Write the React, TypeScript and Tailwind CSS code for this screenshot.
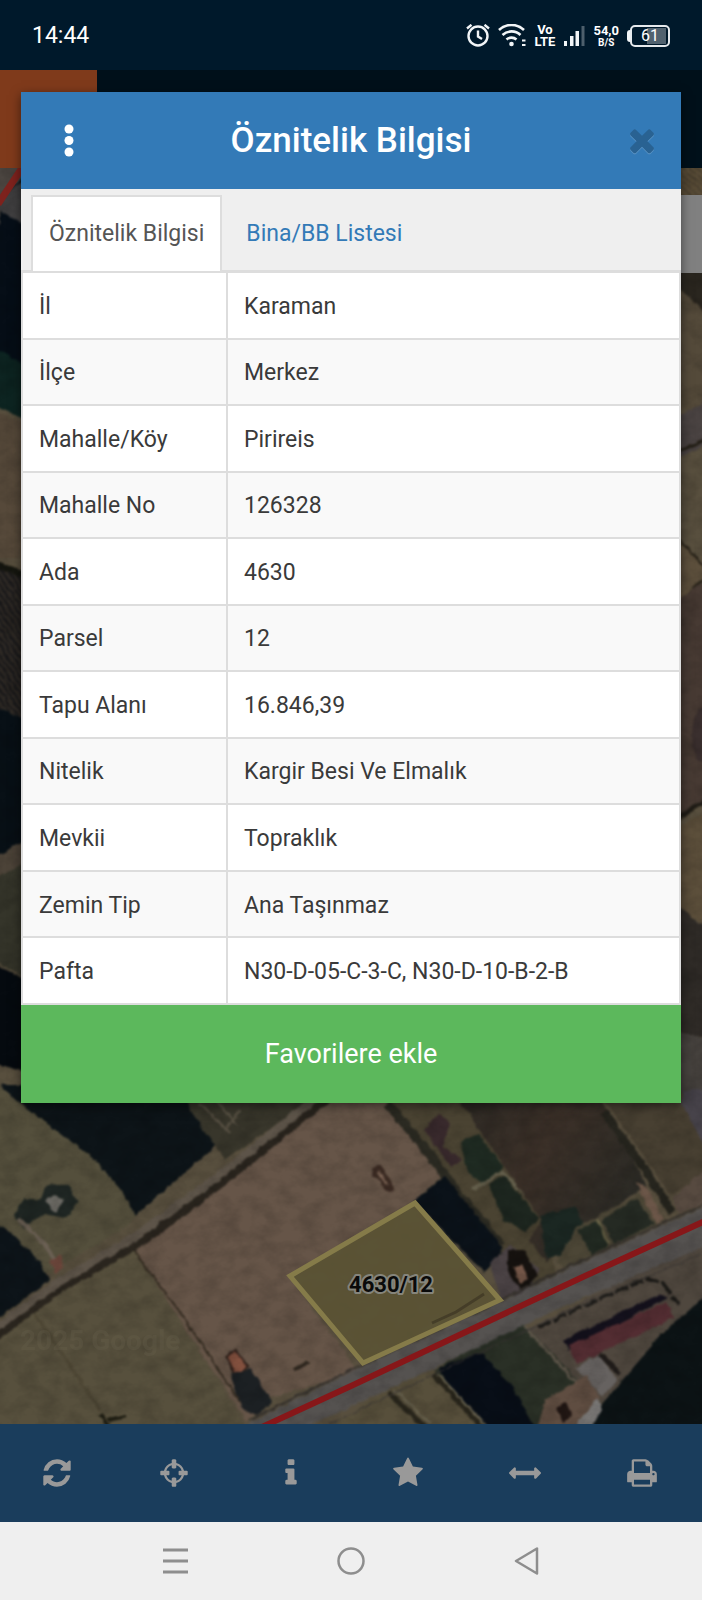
import React from 'react';

const rows = [
  { label: 'İl', value: 'Karaman' },
  { label: 'İlçe', value: 'Merkez' },
  { label: 'Mahalle/Köy', value: 'Pirireis' },
  { label: 'Mahalle No', value: '126328' },
  { label: 'Ada', value: '4630' },
  { label: 'Parsel', value: '12' },
  { label: 'Tapu Alanı', value: '16.846,39' },
  { label: 'Nitelik', value: 'Kargir Besi Ve Elmalık' },
  { label: 'Mevkii', value: 'Topraklık' },
  { label: 'Zemin Tip', value: 'Ana Taşınmaz' },
  { label: 'Pafta', value: 'N30-D-05-C-3-C, N30-D-10-B-2-B' },
];

const tools = [
  {
    name: 'Yenile',
    d: 'M1639 1056q0 5-1 7-64 268-268 434.500t-478 166.500q-146 0-282.500-55t-243.500-157l-129 129q-19 19-45 19t-45-19-19-45v-448q0-26 19-45t45-19h448q26 0 45 19t19 45-19 45l-137 137q71 66 161 102t187 36q134 0 250-65t186-179q11-17 53-117 8-23 30-23h192q13 0 22.500 9.500t9.500 22.500zm25-800v448q0 26-19 45t-45 19h-448q-26 0-45-19t-19-45 19-45l138-138q-148-137-349-137-134 0-250 65t-186 179q-11 17-53 117-8 23-30 23h-199q-13 0-22.500-9.500t-9.500-22.500v-7q65-268 270-434.500t480-166.500q146 0 284 55.500t245 156.500l130-129q19-19 45-19t45 19 19 45z',
  },
  {
    name: 'Konumum',
    d: 'M1325 1024h-109q-26 0-45-19t-19-45v-128q0-26 19-45t45-19h109q-32-108-112.500-188.500t-188.500-112.500v109q0 26-19 45t-45 19h-128q-26 0-45-19t-19-45v-109q-108 32-188.500 112.500t-112.500 188.500h109q26 0 45 19t19 45v128q0 26-19 45t-45 19h-109q32 108 112.500 188.500t188.500 112.500v-109q0-26 19-45t45-19h128q26 0 45 19t19 45v109q108-32 188.500-112.500t112.500-188.500zm339-192v128q0 26-19 45t-45 19h-143q-37 161-154.500 278.500t-278.500 154.500v143q0 26-19 45t-45 19h-128q-26 0-45-19t-19-45v-143q-161-37-278.500-154.500t-154.500-278.500h-143q-26 0-45-19t-19-45v-128q0-26 19-45t45-19h143q37-161 154.500-278.500t278.500-154.500v-143q0-26 19-45t45-19h128q26 0 45 19t19 45v143q161 37 278.500 154.500t154.500 278.500h143q26 0 45 19t19 45z',
  },
  {
    name: 'Bilgi',
    d: 'M1216 1344v128q0 26-19 45t-45 19h-512q-26 0-45-19t-19-45v-128q0-26 19-45t45-19h64v-384h-64q-26 0-45-19t-19-45v-128q0-26 19-45t45-19h384q26 0 45 19t19 45v576h64q26 0 45 19t19 45zm-128-1152v192q0 26-19 45t-45 19h-256q-26 0-45-19t-19-45v-192q0-26 19-45t45-19h256q26 0 45 19t19 45z',
  },
  {
    name: 'Favoriler',
    d: 'M1728 647q0 22-26 48l-363 354 86 500q1 7 1 20 0 21-10.500 35.500t-30.500 14.500q-19 0-40-12l-449-236-449 236q-22 12-40 12-21 0-31.500-14.500t-10.500-35.500q0-6 2-20l86-500-364-354q-25-27-25-48 0-37 56-46l502-73 225-455q19-41 49-41t49 41l225 455 502 73q56 9 56 46z',
  },
  {
    name: 'Ölçüm',
    d: 'M1792 896q0 26-19 45l-256 256q-19 19-45 19t-45-19-19-45v-128h-1024v128q0 26-19 45t-45 19-45-19l-256-256q-19-19-19-45t19-45l256-256q19-19 45-19t45 19 19 45v128h1024v-128q0-26 19-45t45-19 45 19l256 256q19 19 19 45z',
  },
  {
    name: 'Yazdır',
    d: 'M448 1536h896v-256h-896v256zm0-640h896v-384h-160q-40 0-68-28t-28-68v-160h-640v640zm1152 64q0-26-19-45t-45-19-45 19-19 45 19 45 45 19 45-19 19-45zm128 0v416q0 13-9.500 22.500t-22.500 9.500h-224v160q0 40-28 68t-68 28h-960q-40 0-68-28t-28-68v-160h-224q-13 0-22.500-9.500t-9.500-22.500v-416q0-79 56.500-135.500t135.500-56.500h64v-544q0-40 28-68t68-28h672q40 0 88 20t76 48l152 152q28 28 48 76t20 88v256h64q79 0 135.500 56.500t56.500 135.500z',
  },
];

function StatusBar() {
  return (
    <div className="flex h-[70px] items-center justify-between bg-[#00192b] px-8 pt-0.5 text-white">
      <span className="text-[23px] leading-7">14:44</span>
      <div className="flex items-center gap-2">
        {/* Alarm */}
        <svg className="h-6 w-6" viewBox="0 0 24 24" fill="none" stroke="#f2f5f7" strokeWidth="2.400">
          <circle cx="12" cy="12" r="9.500" />
          <path d="M12 6.500v6l4 2.500" />
          <path d="M1 4.500l4.500-3.700M23 4.500l-4.500-3.700" />
        </svg>
        {/* Wi-Fi */}
        <svg className="h-6 w-7" viewBox="0 0 28 24" fill="none" stroke="#f2f5f7" strokeWidth="2.600">
          <path d="M1 6a18 18 0 0 1 25 0" />
          <path d="M4.500 11a13 13 0 0 1 18 0" />
          <path d="M8.500 15.500a7.500 7.500 0 0 1 10 0" />
          <circle cx="13.500" cy="20" r="2.300" fill="#f2f5f7" stroke="none" />
          <path d="M24 16.500h3.500M24 21h3.500" strokeWidth="1.800" />
        </svg>
        <div className="text-center text-[13px] font-bold leading-3">
          <div>Vo</div>
          <div>LTE</div>
        </div>
        {/* Signal */}
        <svg className="h-6 w-[22px]" viewBox="0 0 22 24">
          <path d="M1 17h3v5h-3zM7 12h3.500v10h-3.500zM12.500 7h3.500v15h-3.500z" fill="#f2f5f7" />
          <path d="M18.500 2h3v20h-3z" fill="#4d5f6c" />
        </svg>
        <div className="text-center font-bold">
          <div className="text-[13px] leading-[13px]">54,0</div>
          <div className="text-[10px] leading-[11px]">B/S</div>
        </div>
        {/* Battery */}
        <div className="flex items-center">
          <span className="h-3 w-[3px] rounded-l-sm bg-[#f2f5f7]" />
          <span className="flex h-[22px] w-10 items-center justify-center rounded-[5px] border-2 border-[#e6eaed] p-0.5 text-[16px] leading-4">
            <span className="h-4 w-full bg-linear-to-r from-transparent from-40% to-[#51626f] to-40% text-center">
              61
            </span>
          </span>
        </div>
      </div>
    </div>
  );
}

function SatelliteMap() {
  return (
    <svg
      className="absolute inset-0 h-full w-full"
      viewBox="0 168 702 1256"
      preserveAspectRatio="xMidYMax slice"
    >
      <defs>
        <filter id="soft" x="0" y="0" width="100%" height="100%" colorInterpolationFilters="sRGB">
          <feTurbulence type="fractalNoise" baseFrequency="0.12" numOctaves="2" seed="4" result="n" />
          <feDisplacementMap in="SourceGraphic" in2="n" scale="5" xChannelSelector="R" yChannelSelector="G" />
          <feGaussianBlur stdDeviation="1.2" />
        </filter>
        <filter id="grain" x="0" y="0" width="100%" height="100%">
          <feTurbulence type="fractalNoise" baseFrequency="0.05 0.07" numOctaves="4" seed="9" />
          <feColorMatrix values="0 0 0 0 0  0 0 0 0 0  0 0 0 0 0  0.9 0 0 0 -0.32" />
        </filter>
        <pattern id="rowsA" width="5" height="5" patternUnits="userSpaceOnUse" patternTransform="rotate(55)">
          <rect width="5" height="5" fill="#2f2a25" />
          <rect width="5" height="2" fill="#171719" />
        </pattern>
        <pattern id="rowsB" width="5" height="5" patternUnits="userSpaceOnUse" patternTransform="rotate(40)">
          <rect width="5" height="5" fill="#5b4e38" />
          <rect width="5" height="1" fill="#40382b" />
        </pattern>
        <linearGradient id="plough" x1="0" y1="0" x2="1" y2="0.5">
          <stop offset="0" stopColor="#2c2924" />
          <stop offset="0.5" stopColor="#3b3028" />
          <stop offset="1" stopColor="#2b2a25" />
        </linearGradient>
      </defs>

      <g filter="url(#soft)">
        <rect x="-20" y="150" width="742" height="1300" fill="#584f3e" />

        {/* Left edge */}
        <path d="M-10 150h50v240h-50z" fill="#060e17" />
        <path d="M-10 160h50l-40 40v25l-10-10z" fill="#4c4641" />
        <path d="M-10 205l35-25v43l-10-4z" fill="#403f40" />
        <path d="M-10 350l15 2 30 22v50l-45-20z" fill="#0d2421" />
        <path d="M-10 410l45 18v130l-45 0z" fill="#56493a" />
        <path d="M-10 560l40 12v18l-40-20z" fill="#15160f" />
        <path d="M-10 566l50 18v140l-50-18z" fill="url(#rowsA)" />
        <path d="M-10 706l50 18v140l-50 0z" fill="#081016" />
        <path d="M-10 860l50-28v40l-50 24z" fill="#4c4338" />
        <path d="M-10 880l50-24v130l-50-28z" fill="#35352a" />
        <path d="M-10 962l50 24v90l-50-14z" fill="#060b10" />

        {/* Right edge */}
        <path d="M660 150h60v50h-60z" fill="url(#rowsB)" />
        <path d="M660 260h60v65l-60-46z" fill="#2a261f" />
        <path d="M672 282l40 36v92h-40z" fill="#544a3a" />
        <path d="M670 420l50-26v45l-50 22z" fill="#4b4443" />
        <path d="M670 455l50-22" stroke="#241f16" strokeWidth="3" />
        <path d="M670 530l40 42-40 40" fill="#5c4f3c" stroke="#241f16" strokeWidth="2" />
        <path d="M670 605l50-35v225l-50 26z" fill="#473a33" />
        <ellipse cx="704" cy="735" rx="12" ry="28" fill="#3a2f2e" />
        <path d="M670 822l50-30" stroke="#1f1c16" strokeWidth="4" />
        <path d="M670 832l50-28v130l-50-30z" fill="#5c4f3b" />
        <path d="M670 900l50 40v100l-50-8z" fill="#2f2b27" />
        <path d="M670 1030l50 12v80h-50z" fill="#45413d" />

        {/* Dark orchard and meadow on the left */}
        <path d="M0 1085h190l32 55-85 75-12 4z" fill="#0d1418" />
        <path d="M185 1090h140l-100 70-35-50z" fill="#38362b" />
        <path d="M200 1103l30 30M215 1100l22 25M240 1110l-14 20" stroke="#5b5446" strokeWidth="2" />
        <path d="M-10 1078l28 24 42 31 36 28 24 28 16 28-8 8-128 78z" fill="#544f3c" />
        <path d="M-10 1222l16 6 34 34 10 18-60 44z" fill="#0d1419" />
        <path d="M14 1216l10-18 16 2 8-16 20 2 10 16-12 16-22-4-20 14z" fill="#1f2623" />
        <path d="M44 1202l10-7 10 5-8 12z" fill="#6c6a64" />
        <path d="M18 1218l26 26 14 20" stroke="#6b6054" strokeWidth="4" fill="none" />
        <path d="M50 1260l10-5 4 12-10 6z" fill="#6a453a" />

        {/* Lower fields */}
        <path d="M-10 1340l138-100 120 190h-258z" fill="#57503d" />
        <path d="M34 1312l24 36 42 62" stroke="#4d4634" strokeWidth="3" fill="none" />
        <path d="M100 1414l8 12M108 1420l18-4" stroke="#1d1c12" strokeWidth="4" />
        <path d="M128 1240l90-62 92-80h75l58 78-30 26-124 74 70 96-90 26-22 24z" fill="#665548" />
        <path d="M130 1246l50 66 60 90" stroke="#332b20" strokeWidth="2" fill="none" />

        {/* Dirt road */}
        <path d="M-10 1338l66-50 84-48 78-58 110-88" stroke="#2a251e" strokeWidth="14" fill="none" />
        <path d="M-10 1332l66-48 80-48 80-58 110-88" stroke="#5d5449" strokeWidth="8" fill="none" />

        <path d="M372 1168l8-3 6 8 8 14-3 5-8-3-6-12-6 0z" fill="#3a2a22" />
        <path d="M379 1172l8 12" stroke="#7a6253" strokeWidth="3" />
        <path d="M226 1356l10-6 12 16-12 10z" fill="#82503e" stroke="#2a1d18" strokeWidth="2" />
        <path d="M230 1374l20-6 22 34-16 14-14-8z" fill="#1c2023" />
        <path d="M294 1370l14-8" stroke="#2d261e" strokeWidth="4" />

        {/* Farm strip north-east of the parcel */}
        <path d="M385 1090h70l88 110 14 80-42 20-70-120z" fill="#4a4332" />
        <path d="M388 1104l40 48 26 36 48 58" stroke="#2b2a22" strokeWidth="9" fill="none" />
        <path d="M424 1130l16-16 10 10-8 22 20 14-10 8z" fill="#38292c" />
        <path d="M460 1142l18-8 26 34-22 16-14-12z" fill="#1f2b22" />
        <path d="M488 1184l16-8 34 42-12 14-22-12z" fill="#1d261f" />
        <path d="M472 1190l30-18 42 42" stroke="#65604d" strokeWidth="3" fill="none" />
        <path d="M413 1202l32-26 58 72-18 24z" fill="#0b1219" />
        <path d="M490 1262l20-18 30 26-14 24-26 4z" fill="#4a4244" />
        <path d="M508 1250l16 0 14 26-16 16-14-20z" fill="#16120f" />
        <path d="M514 1268l8-4 6 14-8 6z" fill="#77594a" />

        {/* Ploughed field and the plots beside it */}
        <path d="M452 1090h145l50 96-70 44-30 32-18-22 12-20z" fill="url(#plough)" />
        <path d="M540 1216l36-10 8 20-24 30-14 2z" fill="#1b2722" />
        <path d="M556 1262l20-34 66-36 24 28-100 50z" fill="#4c4636" />
        <path d="M578 1230l20-10 10 26-16 8z" fill="#222a22" />
        <path d="M602 1220l34-22 18 26-40 20z" fill="#252a23" />
        <path d="M597 1218l12 26" stroke="#6a6548" strokeWidth="2" />
        <path d="M636 1182l10 4 18 34-8 4z" fill="#6b5648" />
        <path d="M598 1090h92l20 60v25l-40 20z" fill="#484032" />
        <path d="M682 1090h30v70l-30-56z" fill="#47434a" />
        <path d="M604 1112l44 62 24 38" stroke="#26251e" strokeWidth="8" fill="none" />
        <path d="M672 1198l40-34v36l-34 14z" fill="#574a40" />

        {/* South side of the road */}
        <path d="M526 1330l190-98v70l-126 130h-40z" fill="#4f473e" />
        <path d="M538 1328l40-20 70-30 14 4 16 22" stroke="#1b1a17" strokeWidth="4" strokeDasharray="14 3" fill="none" />
        <path d="M712 1290l-50 44-60 70-24 30h134z" fill="#0c1315" />
        <path d="M563 1340l97-46 8 4-100 52z" fill="#14111c" />
        <path d="M568 1346l98-44 8 16-98 46z" fill="#532d32" />
        <path d="M576 1368l22-14 20 26-16 16z" fill="#666260" />
        <path d="M600 1354l20 20" stroke="#1f1b19" strokeWidth="5" />
        <path d="M434 1370l60-34 30-12 54 56-20 52h-88z" fill="#2a3026" />
        <path d="M438 1368l44-16 30 34 26 46h-60z" fill="#080e17" />
        <path d="M524 1326l46 50 28 22" stroke="#5f574b" strokeWidth="3" fill="none" />
        <path d="M546 1400l40-24 14 22-30 32h-34z" fill="#5f4d41" />
        <path d="M556 1408l10-6 6 14-10 6z" fill="#201613" />
        <path d="M576 1424l22-26 4 12-12 20z" fill="#7a7876" />
        <path d="M320 1434l70-46 44-18 58 64z" fill="#574f3b" />
        <path d="M388 1392l38 36M434 1374l50 56" stroke="#28251b" strokeWidth="5" />
        <path d="M394 1390l36 34M438 1374l48 52" stroke="#6b6551" strokeWidth="2" />

        {/* Main road */}
        <path d="M244 1426l107-54 154-72 60-30 145-66v40l-150 64-130 62-142 66z" fill="#555250" />
        <path d="M250 1420l101-50 154-72 60-30 145-66" stroke="#35312d" strokeWidth="2" fill="none" />
        <path d="M330 1424l130-62 120-56 120-52" stroke="#3a3633" strokeWidth="1" fill="none" />
      </g>

      <rect x="0" y="168" width="702" height="1256" filter="url(#grain)" opacity="0.3" />
      <path d="M262 1427l89-41 174-82 60-28 120-55" stroke="#871719" strokeWidth="6" fill="none" />
      <path d="M-2 204l24-36" stroke="#7d221d" strokeWidth="7" />

      {/* Selected parcel */}
      <path
        d="M415 1203l85 97-137 63-73-87z"
        fill="#5b5334"
        fillOpacity="0.9"
        stroke="#857b49"
        strokeWidth="5"
      />
      <path d="M432 1323l24-11 28-18" stroke="#37301f" strokeWidth="3" opacity="0.6" fill="none" />
      <text
        x="391"
        y="1292"
        textAnchor="middle"
        className="fill-[#0a0a0a] stroke-[#85847b] text-[22px] font-bold"
        strokeWidth="4"
        strokeLinejoin="round"
        paintOrder="stroke"
      >
        4630/12
      </text>
      <text x="20" y="1350" className="fill-[#6b6450] text-[28px] font-bold" opacity="0.25">
        2025 Google
      </text>
    </svg>
  );
}

function AttributeDialog() {
  return (
    <div
      role="dialog"
      aria-labelledby="dialog-title"
      className="absolute inset-x-[21px] top-[22px] bg-white shadow-[0_3px_10px_rgba(0,0,0,0.5)]"
    >
      <div className="grid h-[97px] grid-cols-[95px_1fr_95px] items-center bg-[#337ab7] text-white">
        <button type="button" aria-label="Menü" className="flex justify-center">
          <svg className="h-9 w-3" viewBox="0 0 12 36" fill="currentColor">
            <circle cx="6" cy="6" r="4.500" />
            <circle cx="6" cy="17.500" r="4.500" />
            <circle cx="6" cy="29" r="4.500" />
          </svg>
        </button>
        <h1 id="dialog-title" className="text-center text-[35px] font-medium leading-10">
          Öznitelik Bilgisi
        </h1>
        <button type="button" aria-label="Kapat" className="flex justify-center pb-0.5 pl-4">
          <svg className="h-9 w-9" viewBox="0 0 1792 1792">
            <path
              d="M1490 1372q0 40-28 68l-136 136q-28 28-68 28t-68-28l-294-294-294 294q-28 28-68 28t-68-28l-136-136q-28-28-28-68t28-68l294-294-294-294q-28-28-28-68t28-68l136-136q28-28 68-28t68 28l294 294 294-294q28-28 68-28t68 28l136 136q28 28 28 68t-28 68l-294 294 294 294q28 28 28 68z"
              fill="#5c95c5"
            />
            <path
              d="M1490 1322q0 40-28 68l-136 136q-28 28-68 28t-68-28l-294-294-294 294q-28 28-68 28t-68-28l-136-136q-28-28-28-68t28-68l294-294-294-294q-28-28-28-68t28-68l136-136q28-28 68-28t68 28l294 294 294-294q28-28 68-28t68 28l136 136q28 28 28 68t-28 68l-294 294 294 294q28 28 28 68z"
              fill="#296292"
            />
          </svg>
        </button>
      </div>

      <div role="tablist" className="flex h-[82px] border-b border-[#ddd] bg-[#efefef] pl-[10px] pt-[6px] text-[23px]">
        <button
          type="button"
          role="tab"
          aria-selected="true"
          className="-mb-px border-2 border-b-0 border-[#ddd] bg-white px-4 text-[#555]"
        >
          Öznitelik Bilgisi
        </button>
        <button
          type="button"
          role="tab"
          aria-selected="false"
          className="-mb-px border-2 border-b-0 border-transparent px-[22px] text-[#337ab7]"
        >
          Bina/BB Listesi
        </button>
      </div>

      <table className="h-[734px] w-full table-fixed border-collapse text-[23px] leading-8 text-[#3a3a3a]">
        <tbody>
          {rows.map((row) => (
            <tr key={row.label} className="even:bg-[#f9f9f9]">
              <th scope="row" className="w-[205px] border-2 border-[#ddd] px-4 pt-[3px] text-left font-normal">
                {row.label}
              </th>
              <td className="border-2 border-[#ddd] px-4 pt-[3px]">{row.value}</td>
            </tr>
          ))}
        </tbody>
      </table>

      <button type="button" className="block h-[98px] w-full bg-[#5cb85c] text-[27px] text-white">
        Favorilere ekle
      </button>
    </div>
  );
}

export default function App() {
  return (
    <div className="flex min-h-screen flex-col overflow-hidden font-[Roboto,sans-serif]">
      <StatusBar />

      <main className="relative flex flex-1 flex-col">
        <header className="flex h-[98px] bg-[#00101a]">
          <div className="w-[97px] bg-[#7f3a1b]" />
        </header>
        <div className="relative min-h-[1200px] flex-1 overflow-hidden">
          <SatelliteMap />
          <div className="absolute right-0 top-[27px] h-[78px] w-16 bg-[#808080]" />
        </div>
        <AttributeDialog />
      </main>

      <nav className="grid h-[98px] grid-cols-6 bg-[#1a3d5c] text-[#999]">
        {tools.map((tool) => (
          <button key={tool.name} type="button" aria-label={tool.name} className="flex items-center justify-center pr-1">
            <svg className="h-8 w-8" viewBox="0 0 1792 1792" fill="currentColor">
              <path d={tool.d} />
            </svg>
          </button>
        ))}
      </nav>

      {/* System navigation */}
      <div className="flex h-[78px] items-center justify-center gap-[148px] bg-[#efefef] text-[#8e8e8e]">
        <button type="button" aria-label="Son uygulamalar">
          <svg className="h-7 w-7" viewBox="0 0 28 28" stroke="currentColor" strokeWidth="3">
            <path d="M2 3h25M2 14h25M2 25h25" />
          </svg>
        </button>
        <button type="button" aria-label="Ana ekran">
          <svg className="h-7 w-7" viewBox="0 0 28 28" fill="none" stroke="currentColor" strokeWidth="2.500">
            <circle cx="14" cy="14" r="12.500" />
          </svg>
        </button>
        <button type="button" aria-label="Geri">
          <svg className="h-7 w-7" viewBox="0 0 28 28" fill="none" stroke="currentColor" strokeWidth="2.500" strokeLinejoin="round">
            <path d="M24 1.500v25L3 14z" />
          </svg>
        </button>
      </div>
    </div>
  );
}
